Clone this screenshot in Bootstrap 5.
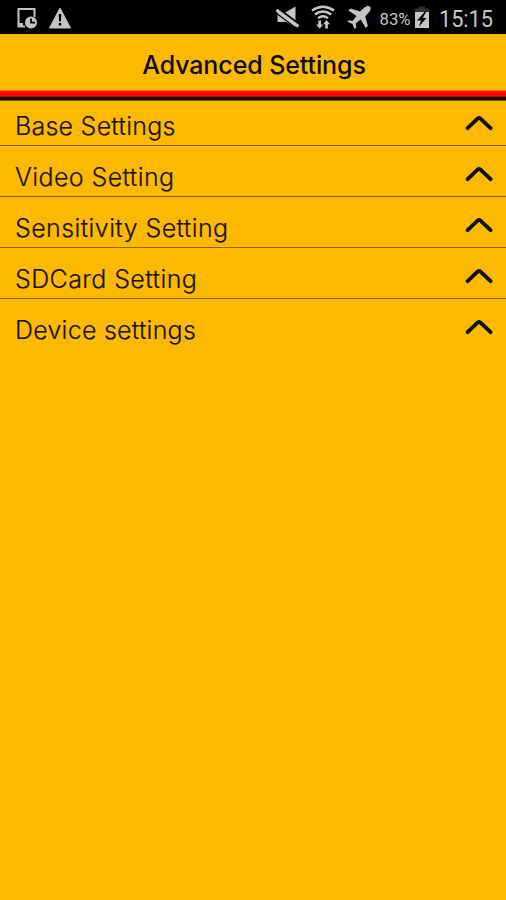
<!DOCTYPE html>
<html lang="en">
<head>
<meta charset="utf-8">
<meta name="viewport" content="width=device-width, initial-scale=1">
<title>Advanced Settings</title>
<link href="https://cdn.jsdelivr.net/npm/bootstrap@5.3.0/dist/css/bootstrap.min.css" rel="stylesheet">
<style>
body{background:#fbba00;font-family:Inter,"Liberation Sans",sans-serif;color:#1c1300}
.status{height:34px;background:#000;color:#c4c4c4;font-family:Roboto,sans-serif}
.status svg{display:block;width:100%;height:34px}
.title-bar{height:56px;padding-top:6px}
.title-bar h1{font-size:25px;line-height:30px;font-weight:500;color:#100b00;letter-spacing:-.1px;padding-left:2px}
.stripe{height:11px;background:linear-gradient(#f57c00 0 1px,#fa0800 1px 6px,#b00000 6px 7px,#080000 7px 10px,#7a5a00 10px 11px)}
.setting{height:51px;padding:16px 12px 0 15px;border:0;border-bottom:1px solid #8a6500;background:transparent;color:inherit;font-size:25px;line-height:30px;font-weight:300;letter-spacing:.4px;-webkit-text-stroke:.2px #1c1300}
.setting:first-child{height:45px;padding-top:10px}
.setting:first-child,.setting:last-child{letter-spacing:.24px}
.setting:last-child{border-bottom:0}
.setting path{fill:none;stroke:#111;stroke-width:3.900px;stroke-linecap:round;stroke-linejoin:round}
</style>
</head>
<body>
<header>
<div class="status">
<svg viewBox="0 0 506 34" fill="#c4c4c4">
<path d="M25 26.500H18.500V9H34.500V17" fill="none" stroke="#c4c4c4" stroke-width="2"/><path d="M18 23h5v4h-5z"/>
<circle cx="31" cy="22.500" r="6"/><path d="M31 18.500v4.200h4" fill="none" stroke="#000" stroke-width="1.700"/>
<path d="M60 8L70.500 28H49.500Z" stroke="#c4c4c4" stroke-linejoin="round"/><path d="M58.700 14h2.600l-.4 7.500h-1.800zM58.800 23h2.400v2.500h-2.400z" fill="#000"/>
<path d="M277.500 12h8.500l9.500-5.500v21l-9.500-5.500h-8.500z"/><path d="M276 7l24 18" stroke="#000" stroke-width="2.200"/><path d="M276.500 10l22 16.500" stroke="#c4c4c4" stroke-width="3"/><path d="M274 11.500l24 18" stroke="#000" stroke-width="1.200"/>
<g fill="none" stroke="#c4c4c4" stroke-width="2.300"><path d="M312 10.500q11-7.500 22 0M314.800 14.500q8.200-6 16.400 0M318 18.200q5-4 10 0"/></g>
<path d="M318.300 20.500h2.700v4h2.200l-3.500 4.300-3.500-4.300h2.100zM325.200 28.500h2.700v-4.200h2.200l-3.500-4.300-3.500 4.300h2.100z"/>
<path d="M370 6.500c-1.500-1-4-.5-5.500 1l-4.500 4-9.500-3-2 2 8 5.500-4 5-3.500-.8-1.500 1.500 5 2.300 2.200 5 1.600-1.500-.6-4 5-4 5 8.500 2.200-2-2.700-9.500 4-4.500c1.500-1.700 2-4 .8-5.500z"/>
<path d="M419 6.500h6v2h4v5h-14v-5h4z" fill="#303030"/><path d="M415 12h14v16h-14z"/><path d="M425.500 11l-8.500 9.500h4l-2 6 7.500-8.500h-3.700l3.700-7z" fill="#000"/>
<text x="379.500" y="24.500" font-size="16" textLength="31" lengthAdjust="spacingAndGlyphs">83%</text>
<text x="439" y="26.500" font-size="23.500" textLength="54" lengthAdjust="spacingAndGlyphs">15:15</text>
</svg>
</div>
<div class="title-bar d-flex align-items-center justify-content-center"><h1 class="m-0">Advanced Settings</h1></div>
<div class="stripe"></div>
</header>
<main class="list-group list-group-flush">
<button class="setting d-flex justify-content-between text-start"><span>Base Settings</span><svg width="30" height="20" viewBox="0 0 30 20"><path d="M3.600 17.200L13.800 7.400Q15 6.400 16.200 7.400L26.600 17.200"/></svg></button>
<button class="setting d-flex justify-content-between text-start"><span>Video Setting</span><svg width="30" height="20" viewBox="0 0 30 20"><path d="M3.600 17.200L13.800 7.400Q15 6.400 16.200 7.400L26.600 17.200"/></svg></button>
<button class="setting d-flex justify-content-between text-start"><span>Sensitivity Setting</span><svg width="30" height="20" viewBox="0 0 30 20"><path d="M3.600 17.200L13.800 7.400Q15 6.400 16.200 7.400L26.600 17.200"/></svg></button>
<button class="setting d-flex justify-content-between text-start"><span>SDCard Setting</span><svg width="30" height="20" viewBox="0 0 30 20"><path d="M3.600 17.200L13.800 7.400Q15 6.400 16.200 7.400L26.600 17.200"/></svg></button>
<button class="setting d-flex justify-content-between text-start"><span>Device settings</span><svg width="30" height="20" viewBox="0 0 30 20"><path d="M3.600 17.200L13.800 7.400Q15 6.400 16.200 7.400L26.600 17.200"/></svg></button>
</main>
<script src="https://cdn.jsdelivr.net/npm/bootstrap@5.3.0/dist/js/bootstrap.bundle.min.js"></script>
</body>
</html>
